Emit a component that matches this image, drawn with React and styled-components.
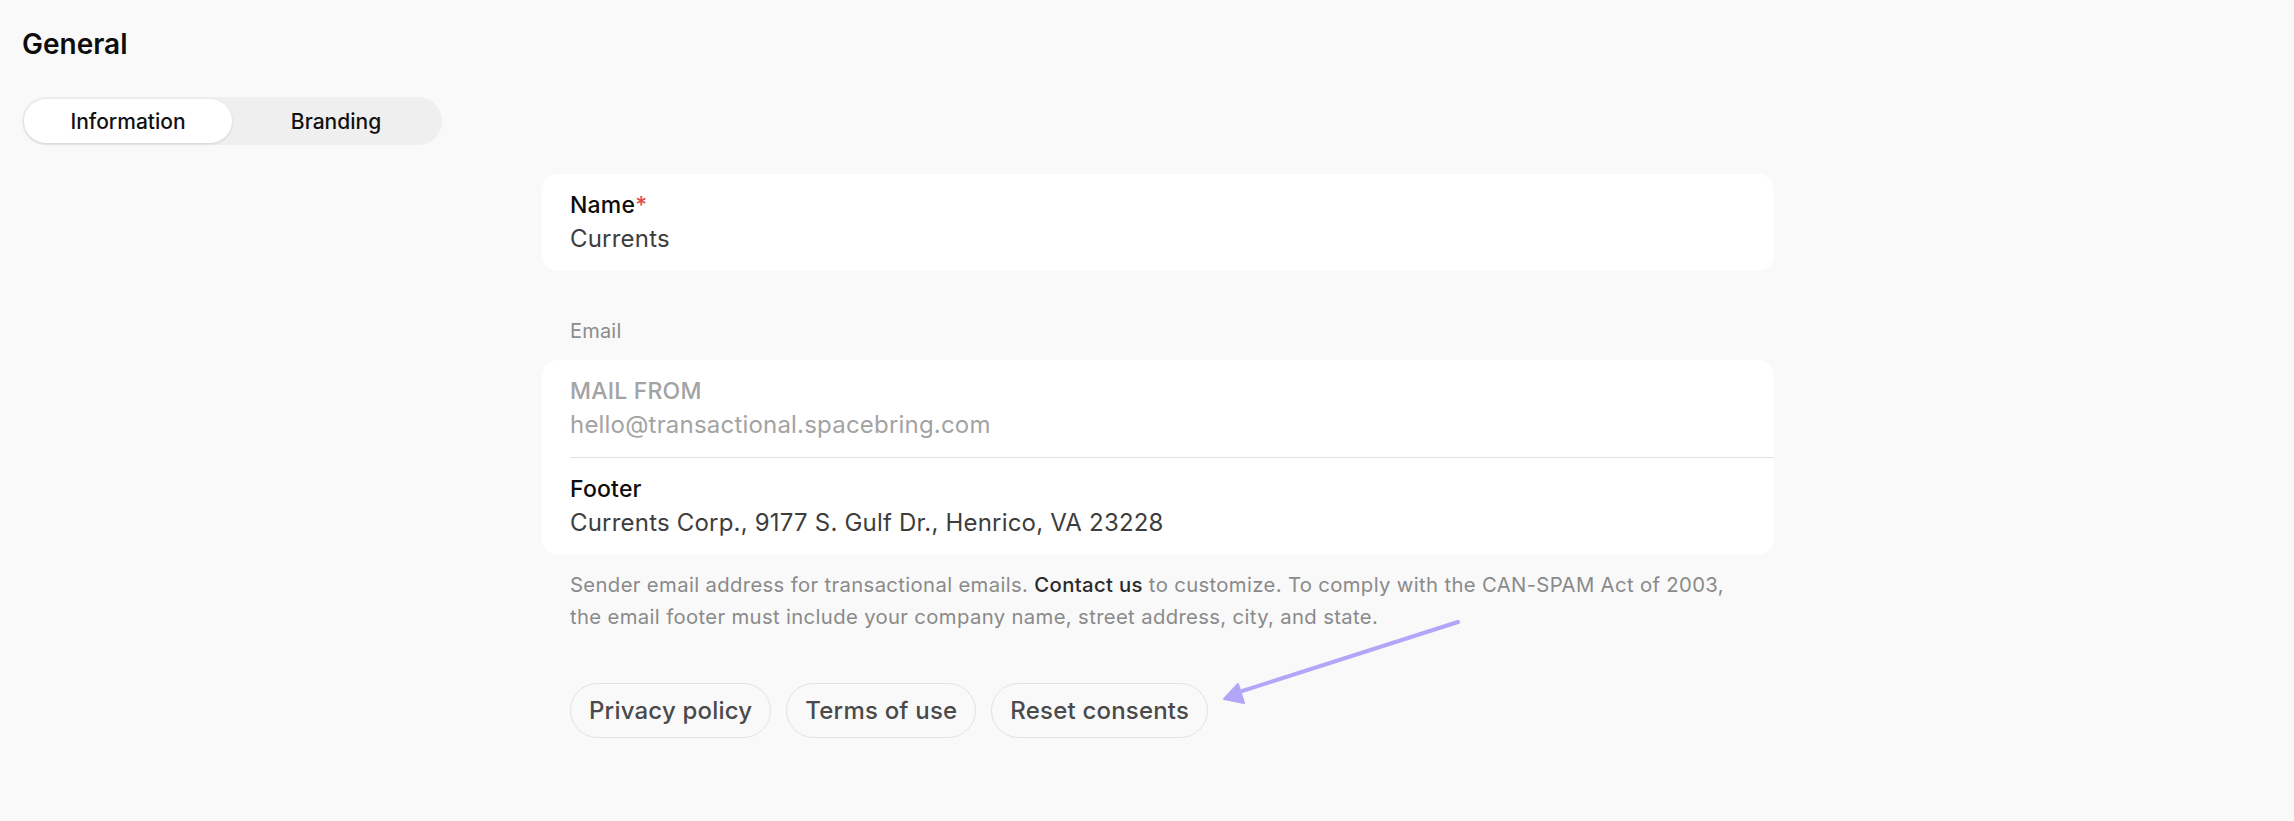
import styled, { createGlobalStyle } from "styled-components";

const GlobalStyle = createGlobalStyle`
  html, body {
    margin: 0;
    padding: 0;
    background: #f9f9f9;
    font-family: Inter, "Noto Sans", sans-serif;
    color: #111;
  }
`;

const Page = styled.div`
  position: relative;
  min-height: 821px;
  box-sizing: border-box;
  padding: 27px 0 40px 22px;
`;

const Title = styled.h1`
  margin: 0;
  font-size: 28px;
  line-height: 34px;
  font-weight: 600;
  color: #0d0d0d;
`;

const Tabs = styled.div`
  display: grid;
  grid-template-columns: 1fr 1fr;
  width: 420px;
  height: 48px;
  box-sizing: border-box;
  padding: 2px;
  margin-top: 36px;
  background: #efefef;
  border-radius: 999px;
`;

const Tab = styled.button`
  border: none;
  font-family: inherit;
  font-size: 21px;
  font-weight: 500;
  color: #111;
  border-radius: 999px;
  background: ${(p) => (p.active ? "#fff" : "transparent")};
  box-shadow: ${(p) => (p.active ? "0 1px 3px rgba(0,0,0,0.12)" : "none")};
  cursor: pointer;
`;

const Form = styled.div`
  width: 1232px;
  margin: 29px auto 0;
  display: flex;
  flex-direction: column;
  letter-spacing: 0.2px;
`;

const Card = styled.div`
  background: #fff;
  border-radius: 16px;
  overflow: hidden;
`;

const Field = styled.div`
  padding: 14px 28px 16px;
  & + & {
    border-top: 1px solid #e2e2e2;
    margin-left: 28px;
    padding-left: 0;
  }
`;

const Label = styled.div`
  font-size: 23px;
  line-height: 34px;
  font-weight: 500;
  color: ${(p) => (p.muted ? "#a3a3a3" : "#0d0d0d")};
`;

const Required = styled.span`
  color: #e5484d;
`;

const Value = styled.div`
  font-size: 24px;
  line-height: 33px;
  color: ${(p) => (p.muted ? "#a3a3a3" : "#3d3d3d")};
`;

const SectionLabel = styled.div`
  margin: 46px 0 15px 28px;
  font-size: 20px;
  line-height: 28px;
  color: #8c8c8c;
`;

const Help = styled.p`
  margin: 14px 0 0;
  padding: 0 28px;
  font-size: 20.3px;
  line-height: 32px;
  letter-spacing: 0.35px;
  color: #8a8a8a;
`;

const Strong = styled.span`
  color: #2b2b2b;
  font-weight: 500;
`;

const Links = styled.div`
  display: flex;
  gap: 15px;
  margin: 50px 0 0 28px;
`;

const Pill = styled.button`
  height: 55px;
  padding: 0 18px;
  border: 1px solid #e2e2e2;
  border-radius: 999px;
  background: transparent;
  font-family: inherit;
  font-size: 24px;
  font-weight: 500;
  letter-spacing: 0.2px;
  color: #4a4a4a;
  cursor: pointer;
`;

const Arrow = styled.svg`
  position: absolute;
  left: 1210px;
  top: 610px;
  pointer-events: none;
`;

export default function App() {
  return (
    <>
      <GlobalStyle />
      <Page>
        <Title>General</Title>
        <Tabs>
          <Tab active>Information</Tab>
          <Tab>Branding</Tab>
        </Tabs>
        <Form>
          <Card>
            <Field>
              <Label>
                Name<Required>*</Required>
              </Label>
              <Value>Currents</Value>
            </Field>
          </Card>
          <SectionLabel>Email</SectionLabel>
          <Card>
            <Field>
              <Label muted>MAIL FROM</Label>
              <Value muted>hello@transactional.spacebring.com</Value>
            </Field>
            <Field>
              <Label>Footer</Label>
              <Value>Currents Corp., 9177 S. Gulf Dr., Henrico, VA 23228</Value>
            </Field>
          </Card>
          <Help>
            Sender email address for transactional emails. <Strong>Contact us</Strong> to
            customize. To comply with the CAN-SPAM Act of 2003, the email footer must
            include your company name, street address, city, and state.
          </Help>
          <Links>
            <Pill>Privacy policy</Pill>
            <Pill>Terms of use</Pill>
            <Pill>Reset consents</Pill>
          </Links>
        </Form>
        <Arrow width="260" height="100" viewBox="0 0 260 100">
          <line x1="248" y1="12" x2="26" y2="83" stroke="#b2a6f9" strokeWidth="4" strokeLinecap="round" />
          <polygon points="14,89 28,74 34,93" fill="#b2a6f9" stroke="#b2a6f9" strokeWidth="2" strokeLinejoin="round" />
        </Arrow>
      </Page>
    </>
  );
}
